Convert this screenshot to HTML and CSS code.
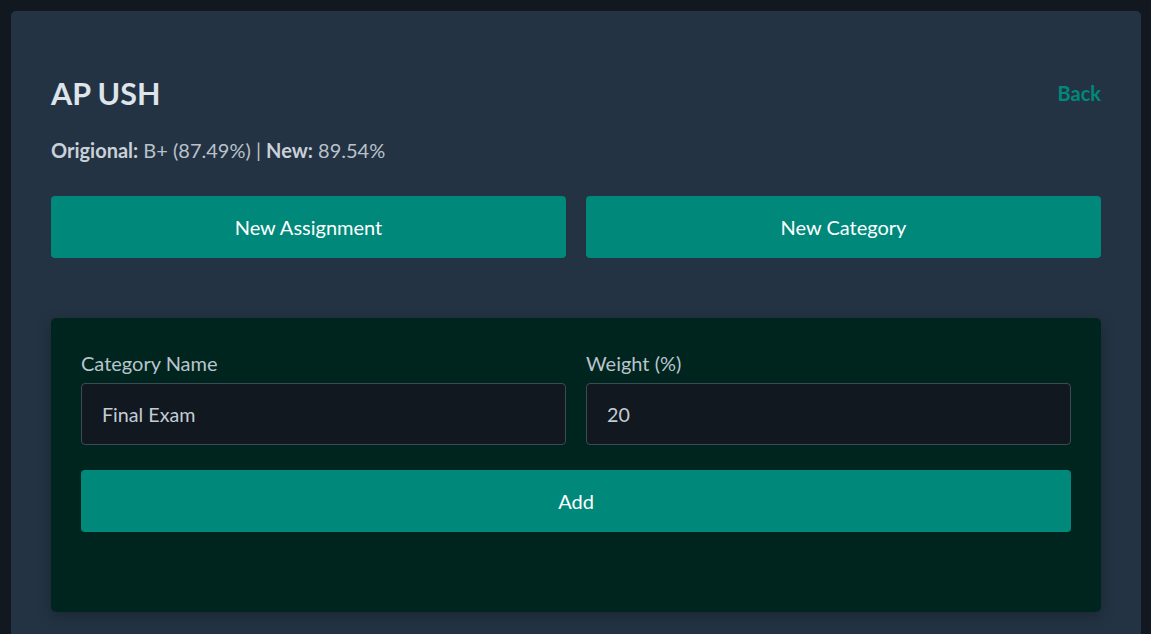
FILE: index.html
```html
<!DOCTYPE html>
<html>
<head>
<meta charset="utf-8">
<link rel="stylesheet" href="styles.css">
</head>
<body>
<div class="card">
  <div class="header">
    <h1 class="title">AP USH</h1>
    <a class="back" href="#">Back</a>
  </div>
  <p class="grades"><b>Origional:</b> B+ (87.49%) | <b>New:</b> 89.54%</p>
  <div class="actions">
    <button class="btn">New Assignment</button>
    <button class="btn">New Category</button>
  </div>
  <div class="panel">
    <div class="fields">
      <label class="field">
        <span class="label">Category Name</span>
        <input class="input" type="text" value="Final Exam">
      </label>
      <label class="field">
        <span class="label">Weight (%)</span>
        <input class="input" type="text" value="20">
      </label>
    </div>
    <button class="btn btn-full">Add</button>
  </div>
</div>
</body>
</html>
```
FILE: styles.css
```css
html, body {
  margin: 0;
  background: #111820;
  height: 100%;
  overflow: hidden;
}
body {
  padding: 11px 10px 0 11px;
  box-sizing: border-box;
  font-family: "Lato", "Noto Sans", sans-serif;
  color: #c3ccd4;
}
.card {
  background: #233343;
  border-radius: 5px;
  padding: 64px 40px 40px 40px;
  min-height: 700px;
}
.header {
  display: flex;
  justify-content: space-between;
  align-items: center;
}
.title {
  margin: 0;
  font-size: 30.5px;
  line-height: 36px;
  font-weight: 700;
  color: #dde4ea;
}
.back {
  color: #00897b;
  font-weight: 700;
  font-size: 20px;
  line-height: 24px;
  text-decoration: none;
}
.grades {
  margin: 27px 0 0 0;
  font-size: 20px;
  line-height: 24px;
  color: #b9c2ca;
}
.grades b {
  color: #c9d1d8;
}
.actions {
  display: grid;
  grid-template-columns: 1fr 1fr;
  gap: 20px;
  margin-top: 34px;
}
.btn {
  background: #00897b;
  color: #ffffff;
  border: none;
  border-radius: 4px;
  height: 62px;
  font-family: inherit;
  font-size: 20px;
  padding: 0;
}
.panel {
  margin-top: 60px;
  background: #00251f;
  border-radius: 5px;
  padding: 33px 30px 80px 30px;
  box-shadow: 0 4px 14px rgba(0,0,0,0.25);
}
.fields {
  display: grid;
  grid-template-columns: 1fr 1fr;
  gap: 20px;
}
.field {
  display: flex;
  flex-direction: column;
  gap: 8px;
}
.label {
  font-size: 20px;
  line-height: 24px;
  color: #b9c4cc;
}
.input {
  background: #111820;
  border: 1px solid #3c4a55;
  border-radius: 4px;
  height: 62px;
  box-sizing: border-box;
  padding: 0 20px;
  font-family: inherit;
  font-size: 19.7px;
  color: #c3ccd4;
  outline: none;
}
.btn-full {
  width: 100%;
  margin-top: 25px;
  display: block;
}
```
